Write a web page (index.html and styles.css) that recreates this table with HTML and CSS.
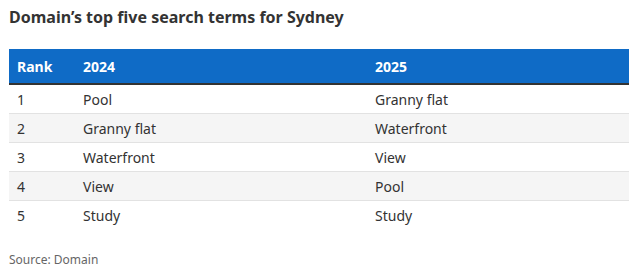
FILE: index.html
```html
<!DOCTYPE html>
<html lang="en">
<head>
<meta charset="utf-8">
<title>Domain's top five search terms for Sydney</title>
<link rel="stylesheet" href="styles.css">
</head>
<body>
<div class="chart">
  <h1 class="title">Domain’s top five search terms for Sydney</h1>
  <div class="table">
    <div class="row head">
      <div class="cell">Rank</div>
      <div class="cell">2024</div>
      <div class="cell">2025</div>
    </div>
    <div class="row">
      <div class="cell">1</div>
      <div class="cell">Pool</div>
      <div class="cell">Granny flat</div>
    </div>
    <div class="row alt">
      <div class="cell">2</div>
      <div class="cell">Granny flat</div>
      <div class="cell">Waterfront</div>
    </div>
    <div class="row">
      <div class="cell">3</div>
      <div class="cell">Waterfront</div>
      <div class="cell">View</div>
    </div>
    <div class="row alt">
      <div class="cell">4</div>
      <div class="cell">View</div>
      <div class="cell">Pool</div>
    </div>
    <div class="row last">
      <div class="cell">5</div>
      <div class="cell">Study</div>
      <div class="cell">Study</div>
    </div>
  </div>
  <p class="source">Source: Domain</p>
</div>
</body>
</html>
```

FILE: styles.css
```css
html, body {
  margin: 0;
  padding: 0;
  background: #ffffff;
}
body {
  font-family: "Noto Sans", "Open Sans", sans-serif;
  color: #333333;
}
.chart {
  width: 620px;
  padding: 0 9px;
}
.title {
  margin: 0;
  padding-top: 6px;
  font-size: 16px;
  line-height: 22px;
  font-weight: 700;
  color: #333333;
}
.table {
  margin-top: 21px;
  display: flex;
  flex-direction: column;
}
.row {
  display: grid;
  grid-template-columns: 66px 292px 1fr;
  height: 28px;
  align-items: center;
  border-bottom: 1px solid #e2e2e2;
  font-size: 14px;
}
.row.alt {
  background: #f5f5f5;
}
.row.last {
  border-bottom: none;
}
.row.head {
  height: 34px;
  background: #0f6bc6;
  color: #ffffff;
  font-weight: 700;
  border-bottom: 2px solid #333333;
}
.cell {
  padding-left: 8px;
}
.source {
  margin: 0;
  padding-top: 23px;
  font-size: 12px;
  line-height: 16px;
  color: #666666;
}
```
